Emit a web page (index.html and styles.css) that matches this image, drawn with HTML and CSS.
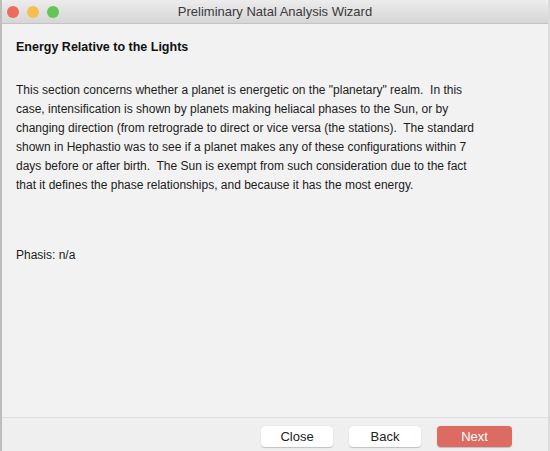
FILE: index.html
```html
<!DOCTYPE html>
<html lang="en">
  <head>
    <meta charset="UTF-8" />
    <title>Preliminary Natal Analysis Wizard</title>
    <link rel="stylesheet" href="styles.css">
  </head>
  <body>
    <div class="window">
      <div class="titlebar">
        <div class="lights">
          <span class="light red"></span>
          <span class="light yellow"></span>
          <span class="light green"></span>
        </div>
        <div class="title">Preliminary Natal Analysis Wizard</div>
      </div>
      <div class="content">
        <h1 class="heading">Energy Relative to the Lights</h1>
        <p class="desc">This section concerns whether a planet is energetic on the "planetary" realm.  In this
case, intensification is shown by planets making heliacal phases to the Sun, or by
changing direction (from retrograde to direct or vice versa (the stations).  The standard
shown in Hephastio was to see if a planet makes any of these configurations within 7
days before or after birth.  The Sun is exempt from such consideration due to the fact
that it defines the phase relationships, and because it has the most energy.</p>
        <p class="phasis">Phasis: n/a</p>
      </div>
      <div class="footer">
        <button class="btn">Close</button>
        <button class="btn">Back</button>
        <button class="btn primary">Next</button>
      </div>
    </div>
  </body>
</html>
```

FILE: styles.css
```css
html, body {
  margin: 0;
  padding: 0;
  height: 100%;
}

body {
  font-family: "Liberation Sans", Arial, sans-serif;
  color: #1c1c1c;
  background: #f0f0f0;
}

.window {
  height: 451px;
  display: flex;
  flex-direction: column;
  border-left: 2px solid #bdbdbd;
  border-right: 2px solid #dcdcdc;
  box-sizing: border-box;
  background: #f2f2f2;
}

.titlebar {
  height: 23px;
  display: flex;
  align-items: center;
  position: relative;
  background: linear-gradient(#ececec, #d6d6d6);
  border-bottom: 1px solid #c4c4c4;
  border-top-left-radius: 5px;
  border-top-right-radius: 5px;
}

.lights {
  display: flex;
  gap: 8px;
  padding-left: 5px;
}

.light {
  width: 12px;
  height: 12px;
  border-radius: 50%;
  &.red { background: #ee6a5f; }
  &.yellow { background: #f6be4f; }
  &.green { background: #62c655; }
}

.title {
  position: absolute;
  left: 0;
  right: 0;
  text-align: center;
  font-size: 13px;
  color: #3a3a3a;
}

.content {
  flex: 1;
  padding: 16px 14px 0 14px;
  border-bottom: 1px solid #dedede;
}

.heading {
  margin: 0;
  font-size: 12.5px;
  font-weight: bold;
  color: #111;
}

.desc {
  margin: 27px 0 0 0;
  font-size: 12px;
  line-height: 19px;
  white-space: pre-wrap;
}

.phasis {
  margin: 53px 0 0 0;
  font-size: 12px;
}

.footer {
  height: 33px;
  box-sizing: border-box;
  display: flex;
  align-items: flex-start;
  justify-content: flex-end;
  gap: 16px;
  padding: 8px 36px 0 0;
  background: #efefef;
}

.btn {
  width: 72px;
  height: 21px;
  border: none;
  border-radius: 4px;
  background: #fff;
  font-family: "Liberation Sans", Arial, sans-serif;
  font-size: 13px;
  color: #222;
  box-shadow: 0 0.5px 1px rgba(0, 0, 0, 0.2);
  &.primary {
    width: 75px;
    background: #dc6b61;
    color: #fff;
  }
}
```
